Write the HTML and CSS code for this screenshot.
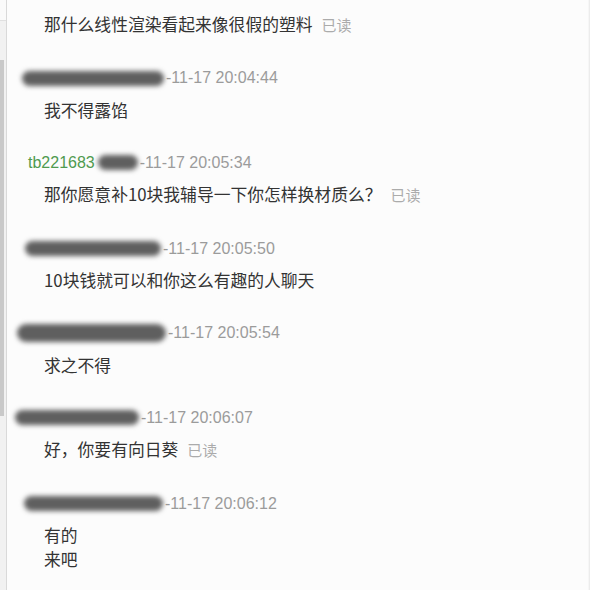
FILE: index.html
```html
<!DOCTYPE html>
<html lang="zh">
<head>
<meta charset="utf-8">
<link rel="stylesheet" href="styles.css">
</head>
<body>
<div class="frame">
  <div class="rail"><div class="rail-top"></div><div class="thumb"></div></div>
  <div class="chat">
    <div class="msg first">
      <div class="body"><span class="text">那什么线性渲染看起来像很假的塑料</span><span class="read">已读</span></div>
    </div>
    <div class="msg">
      <div class="head"><span class="blob" style="margin-left:-6px;width:142px"></span><span class="time">-11-17 20:04:44</span></div>
      <div class="body"><span class="text">我不得露馅</span></div>
    </div>
    <div class="msg">
      <div class="head"><span class="name">tb221683</span><span class="blob" style="margin-left:3px;width:40px"></span><span class="time">-11-17 20:05:34</span></div>
      <div class="body"><span class="text">那你愿意补10块我辅导一下你怎样换材质么？</span><span class="read">已读</span></div>
    </div>
    <div class="msg">
      <div class="head"><span class="blob" style="margin-left:-3px;width:136px"></span><span class="time">-11-17 20:05:50</span></div>
      <div class="body"><span class="text">10块钱就可以和你这么有趣的人聊天</span></div>
    </div>
    <div class="msg">
      <div class="head"><span class="blob tall" style="margin-left:-11px;width:149px"></span><span class="time">-11-17 20:05:54</span></div>
      <div class="body"><span class="text">求之不得</span></div>
    </div>
    <div class="msg">
      <div class="head"><span class="blob" style="margin-left:-13px;width:124px"></span><span class="time">-11-17 20:06:07</span></div>
      <div class="body"><span class="text">好，你要有向日葵</span><span class="read">已读</span></div>
    </div>
    <div class="msg">
      <div class="head"><span class="blob" style="margin-left:-4px;width:139px"></span><span class="time">-11-17 20:06:12</span></div>
      <div class="body multi"><span class="text">有的</span><span class="text">来吧</span></div>
    </div>
  </div>
</div>
</body>
</html>
```

FILE: styles.css
```css
html, body {
  margin: 0;
  padding: 0;
  background: #fcfcfc;
}
.frame {
  display: flex;
  width: 590px;
  height: 590px;
  overflow: hidden;
  font-family: "Liberation Sans", "Noto Sans CJK SC", sans-serif;
}
.rail {
  width: 6px;
  flex: none;
  background: #f1f1f1;
  border-right: 1px solid #d9d9d9;
  display: flex;
  flex-direction: column;
}
.rail-top {
  height: 20px;
  background: #fafafa;
  border-bottom: 1px solid #e0e0e0;
}
.thumb {
  margin-top: 39px;
  width: 4px;
  height: 356px;
  background: #c9c9c9;
}
.chat {
  flex: 1;
  padding: 12px 0 0 21px;
  border-right: 1px solid #ececec;
  box-shadow: inset -1px 0 0 #f6f6f6;
}
.msg {
  margin-bottom: 31.2px;
}
.head {
  height: 20px;
  line-height: 20px;
  font-size: 16px;
  white-space: nowrap;
  display: flex;
  align-items: center;
}
.name {
  color: #4f9a4f;
}
.blob {
  display: inline-block;
  height: 15px;
  background: #5f5f5f;
  border-radius: 8px;
  filter: blur(2.4px);
}
.blob.tall {
  height: 18px;
  border-radius: 9px;
}
.time {
  color: #9b9b9b;
  margin-left: 2px;
}
.body {
  margin-top: 9.5px;
  padding-left: 16px;
  line-height: 24px;
  display: flex;
  align-items: baseline;
  gap: 9px;
}
.body.multi {
  flex-direction: column;
  gap: 0;
}
.text {
  font-family: "Noto Sans CJK SC", sans-serif;
  font-size: 16.8px;
  color: #333333;
}
.read {
  font-family: "Noto Sans CJK SC", sans-serif;
  font-size: 15px;
  color: #ababab;
}
.msg.first .body {
  margin-top: 0;
}
```
